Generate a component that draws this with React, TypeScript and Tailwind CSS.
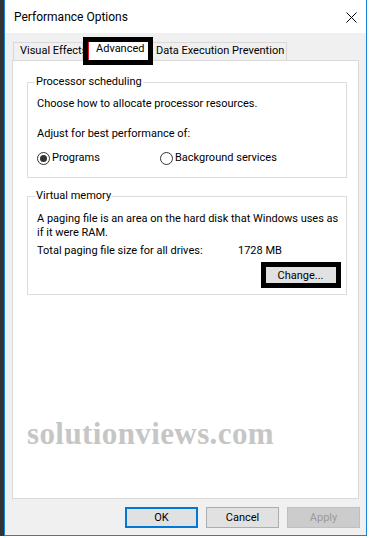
import React from "react";

const font = "font-['Roboto',sans-serif]";

function Radio({ checked, label }: { checked?: boolean; label: string }) {
  return (
    <label className="flex items-center h-[16px]">
      <span className="w-[13px] h-[13px] rounded-full border border-[#333333] bg-white flex items-center justify-center">
        {checked && <span className="w-[7px] h-[7px] rounded-full bg-[#333333]" />}
      </span>
      <span className="ml-[2px]">{label}</span>
    </label>
  );
}

export default function App() {
  return (
    <div className={`w-[372px] h-[538px] bg-white ${font} text-[11px] leading-[16px] text-black overflow-hidden`}>
      <div className="flex h-[536px]">
        <div className="w-[4px] h-full bg-[#333333]" />
        <div className="w-[363px] h-full border-x border-b border-[#1883d7] bg-[#f0f0f0] flex flex-col">
          {/* title bar */}
          <div className="h-[33px] bg-white flex items-center justify-between pl-[9px] pr-[9px] pt-[1px] shrink-0">
            <span className="text-[12px]">Performance Options</span>
            <svg width="11" height="11" viewBox="0 0 11 11">
              <path d="M0.5 0.5 L10.5 10.5 M10.5 0.5 L0.5 10.5" stroke="#000" strokeWidth="1" />
            </svg>
          </div>

          {/* tabs */}
          <div className="mt-[9px] h-[18px] flex items-end pl-[8px] relative z-10">
            <div className="w-[70px] h-[18px] border border-b-0 border-[#d9d9d9] bg-[#f0f0f0] pl-[6px] whitespace-nowrap">
              Visual Effects
            </div>
            <div className="relative w-[70px] h-[23px] -mb-[1px] bg-white pl-[13px] pt-[3px] whitespace-nowrap">
              Advanced
              <div className="absolute left-0 top-[-1px] w-[70px] h-[28px] border-[5px] border-black pointer-events-none">
                <div className="w-px h-full bg-[#e81123]" />
              </div>
            </div>
            <div className="w-[134px] h-[18px] border border-b-0 border-l-0 border-[#d9d9d9] bg-[#f0f0f0] pl-[3px] whitespace-nowrap">
              Data Execution Prevention
            </div>
          </div>

          {/* panel */}
          <div className="ml-[7px] w-[347px] h-[439px] border border-[#d9d9d9] bg-white">
            <fieldset className="mt-[13px] ml-[14px] w-[320px] border border-[#dcdcdc] pl-[9px] pb-[11px]">
              <legend className="ml-[-2px] px-[1px] leading-[16px]">Processor scheduling</legend>
              <div className="pt-[6px]">Choose how to allocate processor resources.</div>
              <div className="mt-[14px]">Adjust for best performance of:</div>
              <div className="mt-[8px] flex">
                <div className="w-[123px]">
                  <Radio checked label="Programs" />
                </div>
                <Radio label="Background services" />
              </div>
            </fieldset>

            <fieldset className="mt-[10px] ml-[14px] w-[320px] border border-[#dcdcdc] pl-[9px] pr-[8px] pb-[7px]">
              <legend className="ml-[-2px] px-[1px] leading-[16px]">Virtual memory</legend>
              <p className="pt-[8px] leading-[14px] mr-[-6px]">
                A paging file is an area on the hard disk that Windows uses as if it were RAM.
              </p>
              <div className="mt-[3px] flex">
                <span className="w-[201px]">Total paging file size for all drives:</span>
                <span>1728 MB</span>
              </div>
              <div className="mt-[5px] flex justify-end">
                <div className="relative">
                  <button className="w-[75px] h-[23px] bg-[#e1e1e1] border border-[#adadad] pt-[1px]">
                    Change...
                  </button>
                  <div className="absolute left-[-2px] top-[-2px] w-[80px] h-[26px] border-[5px] border-black pointer-events-none" />
                </div>
              </div>
            </fieldset>

            <div className="mt-[123px] ml-[14px] font-['Liberation_Serif',serif] font-bold text-[31px] leading-[31px] text-[#c6c6c6] tracking-[0.4px]">
              solutionviews.com
            </div>
          </div>

          {/* buttons */}
          <div className="mt-[8px] flex justify-end gap-[8px] pr-[6px]">
            <button className="w-[73px] h-[21px] bg-[#e1e1e1] border-2 border-[#0078d7] leading-[16px]">OK</button>
            <button className="w-[73px] h-[21px] bg-[#e1e1e1] border border-[#adadad] leading-[16px]">Cancel</button>
            <button className="w-[73px] h-[21px] bg-[#cccccc] border border-[#bfbfbf] text-[#9a9a9a] leading-[16px]">Apply</button>
          </div>
        </div>
      </div>
    </div>
  );
}
